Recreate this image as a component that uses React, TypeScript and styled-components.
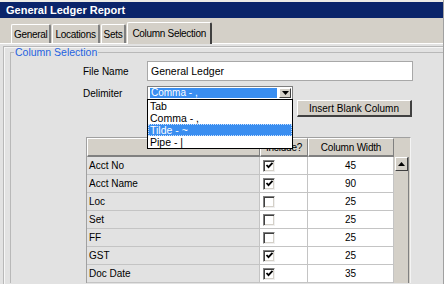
import React from 'react'
import styled, { createGlobalStyle } from 'styled-components'

const GlobalStyle = createGlobalStyle`
html, body {
  margin: 0;
  padding: 0;
}
body {
  width: 444px;
  height: 284px;
  overflow: hidden;
  background: #e2e2e2;
  font-family: "Liberation Sans", Arial, sans-serif;
}
`

const rows = [
  { name: 'Acct No', include: true, width: 45 },
  { name: 'Acct Name', include: true, width: 90 },
  { name: 'Loc', include: false, width: 25 },
  { name: 'Set', include: false, width: 25 },
  { name: 'FF', include: false, width: 25 },
  { name: 'GST', include: true, width: 25 },
  { name: 'Doc Date', include: true, width: 35 },
]

const delimiters = ['Tab', 'Comma - ,', 'Tilde - ~', 'Pipe - |']

const CheckBox = ({ checked }: { checked: boolean }) => (
  <Box>
    {checked && (
      <svg width="9" height="9" viewBox="0 0 9 9">
        <polyline points="1.5,4 3.5,6.2 7.5,1.8" fill="none" stroke="#000" strokeWidth="1.8" />
      </svg>
    )}
  </Box>
)

const App = () => {
  return (
    <Window>
      <GlobalStyle />
      <TitleBar>General Ledger Report</TitleBar>
      <TabStrip>
        <Tab>General</Tab>
        <Tab>Locations</Tab>
        <Tab>Sets</Tab>
        <Tab active>Column Selection</Tab>
      </TabStrip>
      <Panel>
        <Frame>
          <GroupBox>
            <Legend>Column Selection</Legend>
            <Form>
              {/* File name */}
              <FieldRow>
                <Label>File Name</Label>
                <TextInput>General Ledger</TextInput>
              </FieldRow>

              {/* Delimiter combo with its open list */}
              <FieldRow tight>
                <Label>Delimiter</Label>
                <Combo>
                  <ComboValue>Comma - ,</ComboValue>
                  <ComboButton>
                    <svg width="7" height="4" viewBox="0 0 7 4">
                      <polygon points="0,0 7,0 3.5,4" fill="#000" />
                    </svg>
                  </ComboButton>
                  <DropList>
                    {delimiters.map((d, i) => (
                      <DropItem key={d} selected={i === 2}>{d}</DropItem>
                    ))}
                  </DropList>
                </Combo>
              </FieldRow>

              <ButtonRow>
                <Button>Insert Blank Column</Button>
              </ButtonRow>

              {/* Column grid */}
              <Grid>
                <Table>
                  <HeadRow>
                    <HeadCell />
                    <HeadCell>Include?</HeadCell>
                    <HeadCell>Column Width</HeadCell>
                  </HeadRow>
                  {rows.map((r) => (
                    <Row key={r.name}>
                      <NameCell>{r.name}</NameCell>
                      <CheckCell>
                        <CheckBox checked={r.include} />
                      </CheckCell>
                      <WidthCell>{r.width}</WidthCell>
                    </Row>
                  ))}
                </Table>
                <ScrollCol>
                  <ScrollFiller />
                  <ScrollBar>
                    <ScrollButton>
                      <svg width="7" height="4" viewBox="0 0 7 4">
                        <polygon points="0,4 7,4 3.5,0" fill="#000" />
                      </svg>
                    </ScrollButton>
                    <Track />
                  </ScrollBar>
                </ScrollCol>
              </Grid>
            </Form>
          </GroupBox>
        </Frame>
      </Panel>
    </Window>
  )
}

export default App

const Window = styled.div`
width: 444px;
height: 284px;
display: flex;
flex-direction: column;
overflow: hidden;
border-right: 1px solid #a0a0a0;
box-sizing: border-box;
`

const TitleBar = styled.div`
height: 16px;
border-top: 2px solid #ecebe6;
border-bottom: 1px solid #d4d0c8;
background: #0a246a;
color: #fff;
font-size: 11px;
font-weight: 700;
padding-left: 6px;
display: flex;
align-items: center;
`

const TabStrip = styled.div`
height: 24px;
background: #d4d0c8;
border-bottom: 1px solid #fff;
display: flex;
align-items: flex-end;
padding-left: 11px;
`

const Tab = styled.div<{ active?: boolean }>`
height: ${(p) => (p.active ? 21 : 18)}px;
margin-bottom: ${(p) => (p.active ? -1 : 0)}px;
padding: 0 ${(p) => (p.active ? 4 : 2)}px;
margin-right: 1px;
display: flex;
align-items: center;
font-size: 10px;
letter-spacing: -0.3px;
color: #000;
background: #d4d0c8;
border-top: 1px solid #fff;
border-left: 1px solid #fff;
border-right: 2px solid ${(p) => (p.active ? '#404040' : '#808080')};
border-radius: 2px 2px 0 0;
position: relative;
`

const Panel = styled.div`
flex: 1;
background: #e2e2e2;
padding: 2px 0 0 3px;
display: flex;
min-height: 0;
`

const Frame = styled.div`
flex: 1;
border-top: 1px solid #b8b8b8;
border-left: 1px solid #b8b8b8;
box-shadow: inset 1px 1px #f6f6f6;
padding: 0 0 0 6px;
`

const GroupBox = styled.fieldset`
margin: 0;
padding: 0;
border: 1px solid #b8b8b8;
border-right: none;
border-bottom: none;
min-width: 0;
`

const Legend = styled.legend`
font-size: 10.5px;
line-height: 11px;
color: #1f62e0;
padding: 0 1px;
margin-left: 3px;
`

const Form = styled.div`
padding: 3px 0 0 72px;
`

const FieldRow = styled.div<{ tight?: boolean }>`
display: flex;
align-items: center;
margin-top: ${(p) => (p.tight ? 5 : 0)}px;
`

const Label = styled.div`
width: 64px;
font-size: 10px;
color: #000;
`

const TextInput = styled.div`
width: 266px;
height: 20px;
box-sizing: border-box;
border: 1px solid #a8a8a8;
background: #fff;
font-size: 10.5px;
display: flex;
align-items: center;
padding-left: 3px;
`

const Combo = styled.div`
position: relative;
width: 146px;
height: 14px;
box-sizing: border-box;
border: 1px solid #7f7f7f;
background: #fff;
display: flex;
align-items: stretch;
padding: 1px 1px 1px 2px;
`

const ComboValue = styled.div`
flex: 1;
background: #3a8ef0;
color: #fff;
font-size: 10px;
line-height: 10px;
padding-left: 1px;
`

const ComboButton = styled.div`
width: 12px;
margin-left: 2px;
background: #d4d0c8;
border-top: 1px solid #fff;
border-left: 1px solid #fff;
border-right: 1px solid #404040;
border-bottom: 1px solid #404040;
box-sizing: border-box;
display: flex;
align-items: center;
justify-content: center;
`

const DropList = styled.div`
position: absolute;
top: 100%;
left: -1px;
width: 146px;
box-sizing: border-box;
border: 1px solid #000;
background: #fff;
z-index: 5;
`

const DropItem = styled.div<{ selected?: boolean }>`
height: 12px;
font-size: 10.5px;
line-height: 12px;
padding-left: 2px;
color: ${(p) => (p.selected ? '#fff' : '#000')};
background: ${(p) => (p.selected ? '#3a8ef0' : '#fff')};
outline: ${(p) => (p.selected ? '1px dotted #c9e1ff' : 'none')};
outline-offset: -1px;
`

const ButtonRow = styled.div`
width: 329px;
display: flex;
justify-content: flex-end;
`

const Button = styled.div`
width: 115px;
height: 17px;
box-sizing: border-box;
background: #d4d0c8;
border-top: 1px solid #fff;
border-left: 1px solid #fff;
border-right: 2px solid #404040;
border-bottom: 2px solid #404040;
font-size: 10px;
display: flex;
align-items: center;
justify-content: center;
`

const Grid = styled.div`
margin: 20px 0 0 3px;
width: 325px;
display: flex;
border-top: 1px solid #a0a0a0;
border-left: 1px solid #a0a0a0;
border-right: 1px solid #f4f4f4;
box-sizing: border-box;
font-size: 10px;
color: #000;
`

const Table = styled.div`
width: 307px;
`

const HeadRow = styled.div`
display: grid;
grid-template-columns: 173px 48px 86px;
height: 19px;
`

const HeadCell = styled.div`
background: #d4d0c8;
border-top: 1px solid #fff;
border-left: 1px solid #fff;
border-right: 1px solid #808080;
border-bottom: 2px solid #808080;
box-sizing: border-box;
letter-spacing: -0.2px;
display: flex;
align-items: center;
justify-content: center;
`

const Row = styled.div`
display: grid;
grid-template-columns: 173px 48px 86px;
height: 18px;
`

const NameCell = styled.div`
background: #e2e2e2;
border-bottom: 1px solid #c4c4c4;
border-right: 1px solid #c4c4c4;
display: flex;
align-items: center;
padding-left: 2px;
`

const CheckCell = styled.div`
background: #fff;
border-bottom: 1px solid #c4c4c4;
border-right: 1px solid #c4c4c4;
display: flex;
align-items: center;
padding-left: 3px;
`

const WidthCell = styled.div`
background: #fff;
border-bottom: 1px solid #c4c4c4;
border-right: 1px solid #c4c4c4;
display: flex;
align-items: center;
justify-content: center;
`

const Box = styled.div`
width: 12px;
height: 12px;
box-sizing: border-box;
border-top: 1px solid #808080;
border-left: 1px solid #808080;
border-right: 1px solid #f0f0f0;
border-bottom: 1px solid #f0f0f0;
box-shadow: inset 1px 1px #404040, inset -1px -1px #d4d0c8;
background: #fff;
display: flex;
align-items: center;
justify-content: center;
`

const ScrollCol = styled.div`
flex: 1;
display: flex;
flex-direction: column;
background: #d4d0c8;
`

const ScrollFiller = styled.div`
height: 19px;
background: #d4d0c8;
`

const ScrollBar = styled.div`
flex: 1;
display: flex;
flex-direction: column;
padding-left: 1px;
border-right: 1px solid #808080;
width: 13px;
`

const ScrollButton = styled.div`
height: 14px;
box-sizing: border-box;
border-top: 1px solid #fff;
border-left: 1px solid #fff;
border-right: 1px solid #404040;
border-bottom: 1px solid #404040;
background: #d4d0c8;
display: flex;
align-items: center;
justify-content: center;
`

const Track = styled.div`
flex: 1;
height: 200px;
background: #d4d0c8;
`
